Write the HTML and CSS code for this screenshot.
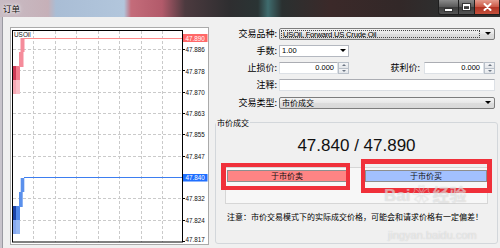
FILE: index.html
```html
<!DOCTYPE html>
<html lang="zh-CN">
<head>
<meta charset="utf-8">
<title>订单</title>
<link rel="stylesheet" href="styles.css">
</head>
<body>
<div class="titlebar">
  <span class="title">订单</span>
  <div class="winbtns">
    <div class="wb min"><span class="ico-min"></span></div>
    <div class="wb max"><span class="ico-max"></span></div>
    <div class="wb close">
      <svg width="9" height="8" viewBox="0 0 9 8"><path d="M1.5 1 L7.5 7 M7.5 1 L1.5 7" stroke="#fff" stroke-width="2" stroke-linecap="round"/></svg>
    </div>
  </div>
</div>
<div class="frame">
  <div class="leftedge"></div>
  <div class="main">
    <div class="chart">
      <svg width="199" height="218" viewBox="10 27 199 218">
        <rect x="10.5" y="27.5" width="198" height="217" fill="#fff" stroke="#aaaaaa"/>
        <g stroke="#cacaca" stroke-dasharray="3 2" stroke-width="1">
          <line x1="13" y1="49.5" x2="182" y2="49.5"/>
          <line x1="13" y1="70.5" x2="182" y2="70.5"/>
          <line x1="13" y1="92.5" x2="182" y2="92.5"/>
          <line x1="13" y1="113.5" x2="182" y2="113.5"/>
          <line x1="13" y1="134.5" x2="182" y2="134.5"/>
          <line x1="13" y1="156.5" x2="182" y2="156.5"/>
          <line x1="13" y1="198.5" x2="182" y2="198.5"/>
          <line x1="13" y1="220.5" x2="182" y2="220.5"/>
          <line x1="33.5" y1="31" x2="33.5" y2="242"/>
          <line x1="55.5" y1="31" x2="55.5" y2="242"/>
          <line x1="76.5" y1="31" x2="76.5" y2="242"/>
          <line x1="98.5" y1="31" x2="98.5" y2="242"/>
          <line x1="119.5" y1="31" x2="119.5" y2="242"/>
          <line x1="141.5" y1="31" x2="141.5" y2="242"/>
          <line x1="162.5" y1="31" x2="162.5" y2="242"/>
        </g>
        <!-- ask bars -->
        <rect x="12.5" y="66" width="3.5" height="14" fill="#cc3a55"/>
        <rect x="12.5" y="80" width="3.5" height="14" fill="#f7a9b5"/>
        <rect x="16" y="66" width="4" height="14" fill="#f27a8b"/>
        <rect x="16" y="80" width="4" height="14" fill="#fbc0c8"/>
        <rect x="19" y="52" width="4.5" height="15" fill="#f58c9b"/>
        <rect x="20.5" y="38" width="4" height="14" fill="#f58c9b"/>
        <!-- bid bars -->
        <rect x="12.5" y="206" width="3.5" height="14" fill="#1c44a8"/>
        <rect x="12.5" y="220" width="3.5" height="14" fill="#86a8f0"/>
        <rect x="16" y="206" width="4" height="14" fill="#4f86e8"/>
        <rect x="16" y="220" width="4" height="14" fill="#96b8f4"/>
        <rect x="19" y="192" width="3.7" height="15" fill="#5a90ec"/>
        <rect x="20.7" y="178" width="3.6" height="14" fill="#5a90ec"/>
        <line x1="24" y1="38.5" x2="182" y2="38.5" stroke="#ff8a8a"/>
        <line x1="24" y1="177.5" x2="182" y2="177.5" stroke="#3d7ef0"/>
        <rect x="12.5" y="30.5" width="170" height="211.5" fill="none" stroke="#000"/>
        <g stroke="#000">
          <line x1="182.5" y1="49.5" x2="185" y2="49.5"/>
          <line x1="182.5" y1="70.5" x2="185" y2="70.5"/>
          <line x1="182.5" y1="92.5" x2="185" y2="92.5"/>
          <line x1="182.5" y1="113.5" x2="185" y2="113.5"/>
          <line x1="182.5" y1="134.5" x2="185" y2="134.5"/>
          <line x1="182.5" y1="156.5" x2="185" y2="156.5"/>
          <line x1="182.5" y1="198.5" x2="185" y2="198.5"/>
          <line x1="182.5" y1="220.5" x2="185" y2="220.5"/>
          <line x1="182.5" y1="241.5" x2="185" y2="241.5"/>
        </g>
        <text class="sym" x="14" y="34">USOil</text>
        <rect x="183" y="34" width="24.5" height="8" fill="#ff6868"/>
        <rect x="183" y="174" width="24.5" height="7.5" fill="#1f6fff"/>
        <g class="axis">
          <text class="hl" x="185.5" y="38.2">47.890</text>
          <text x="185.5" y="49.6">47.886</text>
          <text x="185.5" y="71">47.878</text>
          <text x="185.5" y="92.4">47.870</text>
          <text x="185.5" y="113.6">47.863</text>
          <text x="185.5" y="134.8">47.855</text>
          <text x="185.5" y="156.4">47.847</text>
          <text class="hl" x="185.5" y="177.9">47.840</text>
          <text x="185.5" y="198.6">47.832</text>
          <text x="185.5" y="220.6">47.824</text>
          <text x="185.5" y="239.6">47.817</text>
        </g>
      </svg>
    </div>
    <div class="side">
      <div class="form">
        <label class="lbl">交易品种:</label>
        <div class="combo gray full"><span class="focus">USOil, Forward US Crude Oil</span><i class="arrow"></i></div>
        <label class="lbl">手数:</label>
        <div class="combo white"><span class="val">1.00</span><i class="arrow"></i></div>
        <label class="lbl">止损价:</label>
        <div class="num"><span class="txt">0.000</span><span class="spin"><b class="up"></b><b class="dn"></b></span></div>
        <label class="lbl tp">获利价:</label>
        <div class="num"><span class="txt">0.000</span><span class="spin"><b class="up"></b><b class="dn"></b></span></div>
        <label class="lbl">注释:</label>
        <div class="edit full"></div>
        <label class="lbl">交易类型:</label>
        <div class="combo gray full"><span class="cjkval">市价成交</span><i class="arrow"></i></div>
      </div>
      <fieldset class="group">
        <legend>市价成交</legend>
        <div class="price">47.840 / 47.890</div>
        <div class="panel">
          <div class="btn sell">于市价卖</div>
          <div class="btn buy">于市价买</div>
        </div>
        <div class="note">注意：市价交易模式下的实际成交价格，可能会和请求价格有一定偏差！</div>
      </fieldset>
    </div>
  </div>
</div>
<div class="anno anno-sell"></div>
<div class="anno anno-buy"></div>
<div class="wm wm-logo">Bai<span class="paw">❀</span>经验</div>
<div class="wm wm-url">jingyan.baidu.com</div>
</body>
</html>
```
FILE: styles.css
```css
* { box-sizing: border-box; }
html, body { margin: 0; padding: 0; }
body {
  width: 500px;
  height: 248px;
  overflow: hidden;
  position: relative;
  background: #f0f0f0;
  font-family: "Liberation Sans", "Noto Sans CJK SC", sans-serif;
  color: #000;
}

/* title bar */
.titlebar {
  height: 17px;
  display: flex;
  align-items: flex-start;
  background: linear-gradient(90deg, #c8bcc4 0, #c6b0b8 48px, #a9bdd5 56px, #b2c6dc 124px, #c46c7a 131px, #b25a6a 162px, #4c3a3f 185px, #2e2e30 230px, #2a3434 258px, #3f6c6e 268px, #2a3030 282px, #3b2929 330px, #322828 400px, #2e2e2e 438px);
}
.title {
  font-family: "Noto Sans CJK SC", sans-serif;
  font-size: 8.5px;
  line-height: 10px;
  margin: 3px 0 0 3px;
  color: #111;
  text-shadow: 0 0 3px #fff, 0 0 5px #eee;
}
.winbtns { margin-left: auto; display: flex; height: 15px; }
.wb {
  height: 15px;
  display: flex;
  align-items: center;
  justify-content: center;
  border: 1px solid #1e1e1e;
  border-top: none;
  background: linear-gradient(#8a8a8a, #5a5a5a 48%, #3c3c3c 52%, #555 100%);
}
.wb.min { width: 21px; border-radius: 0 0 0 3px; }
.wb.max { width: 16px; border-left: none; }
.wb.close {
  width: 25px;
  border-left: none;
  background: linear-gradient(#e49a8c, #cc5a48 48%, #b23424 52%, #c4503c 100%);
}
.ico-min { width: 7px; height: 2px; background: #fff; margin-top: 5px; box-shadow: 0 0 0 1px #333; }
.ico-max { width: 7px; height: 6px; border: 1px solid #fff; border-top-width: 2px; box-shadow: 0 0 0 1px #333; }

/* frame */
.frame { display: flex; height: 231px; }
.leftedge { width: 3px; background: #c8c4cc; border-right: 1px solid #9a9aa2; flex: none; }
.main { flex: 1; display: flex; gap: 6px; padding: 10px 0 0 7px; }
.chart { width: 199px; height: 218px; flex: none; }
.chart svg { display: block; }
.sym { font-family: "Liberation Sans", sans-serif; font-size: 6.4px; fill: #222; dominant-baseline: central; }
.axis text { font-family: "Liberation Sans", sans-serif; font-size: 6.3px; fill: #111; dominant-baseline: central; }
.axis text.hl { fill: #fff; }

.side { width: 283px; flex: none; display: flex; flex-direction: column; }

/* form */
.form {
  margin-top: 0.5px;
  display: grid;
  grid-template-columns: 64px 70px 75px 71px;
  grid-auto-rows: 12px;
  row-gap: 5.3px;
}
.lbl {
  grid-column: 1;
  font-family: "Noto Sans CJK SC", sans-serif;
  font-size: 9px;
  line-height: 12px;
  text-align: right;
  padding-right: 2px;
  white-space: nowrap;
}
.lbl.tp { grid-column: 3; padding-right: 4px; }
.full { grid-column: 2 / 5; }

.combo { display: flex; align-items: stretch; border-radius: 2px; }
.combo.gray {
  border: 1px solid #7c7c7c;
  background: linear-gradient(#f3f3f3, #e6e6e6 50%, #dcdcdc 51%, #d8d8d8);
}
.combo.white { border: 1px solid #b4b8c0; background: #fff; border-radius: 0; }
.focus {
  flex: 1;
  margin: 1px;
  border: 1px dotted #444;
  padding-left: 1px;
  font-size: 7.6px;
  letter-spacing: -0.2px;
  line-height: 8px;
  white-space: nowrap;
  color: #000;
}
.val { flex: 1; padding-left: 2px; font-size: 7.5px; line-height: 10px; }
.cjkval {
  flex: 1;
  padding-left: 2px;
  font-family: "Noto Sans CJK SC", sans-serif;
  font-size: 8px;
  line-height: 10px;
}
.arrow { width: 13px; flex: none; display: flex; align-items: center; justify-content: center; }
.arrow::after {
  content: "";
  border-left: 3px solid transparent;
  border-right: 3px solid transparent;
  border-top: 3px solid #000;
}
.combo.white .arrow { width: 10px; }

.num { display: flex; }
.txt {
  flex: 1;
  background: #fff;
  border: 1px solid #dde1e6;
  border-top-color: #abadb3;
  text-align: right;
  padding-right: 3px;
  font-size: 7.5px;
  line-height: 10px;
}
.spin { width: 11px; flex: none; display: flex; flex-direction: column; }
.spin b {
  flex: 1;
  display: flex;
  align-items: center;
  justify-content: center;
  border: 1px solid #b9c0c9;
  background: linear-gradient(#f4f5f7, #e3e6ea);
}
.spin b.dn { border-top: none; }
.spin b.up::after {
  content: "";
  border-left: 2px solid transparent;
  border-right: 2px solid transparent;
  border-bottom: 2px solid #6d7684;
}
.spin b.dn::after {
  content: "";
  border-left: 2px solid transparent;
  border-right: 2px solid transparent;
  border-top: 2px solid #6d7684;
}
.edit { background: #fff; border: 1px solid #dde1e6; border-top-color: #abadb3; }

/* group */
.group {
  margin: 10.3px 0 0 0;
  padding: 0;
  height: 125px;
  border: 1px solid #d3d7db;
  border-radius: 3px;
  min-width: 0;
}
.group legend {
  padding: 0 1px;
  margin-left: 0;
  font-family: "Noto Sans CJK SC", sans-serif;
  font-size: 8px;
  line-height: 8px;
}
.price {
  margin-top: 9px;
  font-size: 17px;
  line-height: 20px;
  text-align: center;
  color: #111;
}
.panel {
  margin: 11px 9px 0 9px;
  height: 37px;
  border: 1px solid #d6d6d6;
  background: #f7f7f7;
  padding: 2px 0 0 1px;
  display: flex;
  justify-content: space-between;
  align-items: flex-start;
}
.btn {
  height: 12px;
  border: 1px solid #8e8e8e;
  font-family: "Noto Sans CJK SC", sans-serif;
  font-size: 8px;
  line-height: 10px;
  text-align: center;
  color: #111;
}
.btn.sell { width: 120px; background: #ff8484; }
.btn.buy { width: 122px; background: #a2c0ff; }
.note {
  margin: 8px 0 0 11px;
  font-family: "Noto Sans CJK SC", sans-serif;
  font-size: 8px;
  line-height: 10px;
  white-space: nowrap;
}

/* annotations drawn over the screenshot */
.anno { position: absolute; border: 4px solid #f0303a; }
.anno-sell { left: 221px; top: 163px; width: 129px; height: 27px; border-left-width: 5px; }
.anno-buy { left: 361px; top: 159px; width: 131px; height: 34px; border-width: 5px 5px 5px 4px; }

/* watermark */
.wm {
  position: absolute;
  color: rgba(255, 255, 255, 0.5);
  text-shadow: 0 0 1px rgba(110, 110, 110, 0.35);
  white-space: nowrap;
}
.wm-logo {
  left: 384px;
  top: 185px;
  font-family: "Liberation Sans", "Noto Sans CJK SC", sans-serif;
  font-size: 17px;
  line-height: 20px;
  font-weight: bold;
}
.paw { font-size: 18px; margin: 0 2px; }
.wm-url {
  left: 388px;
  top: 229px;
  font-family: "Liberation Sans", sans-serif;
  font-size: 11px;
  line-height: 12px;
}
```
